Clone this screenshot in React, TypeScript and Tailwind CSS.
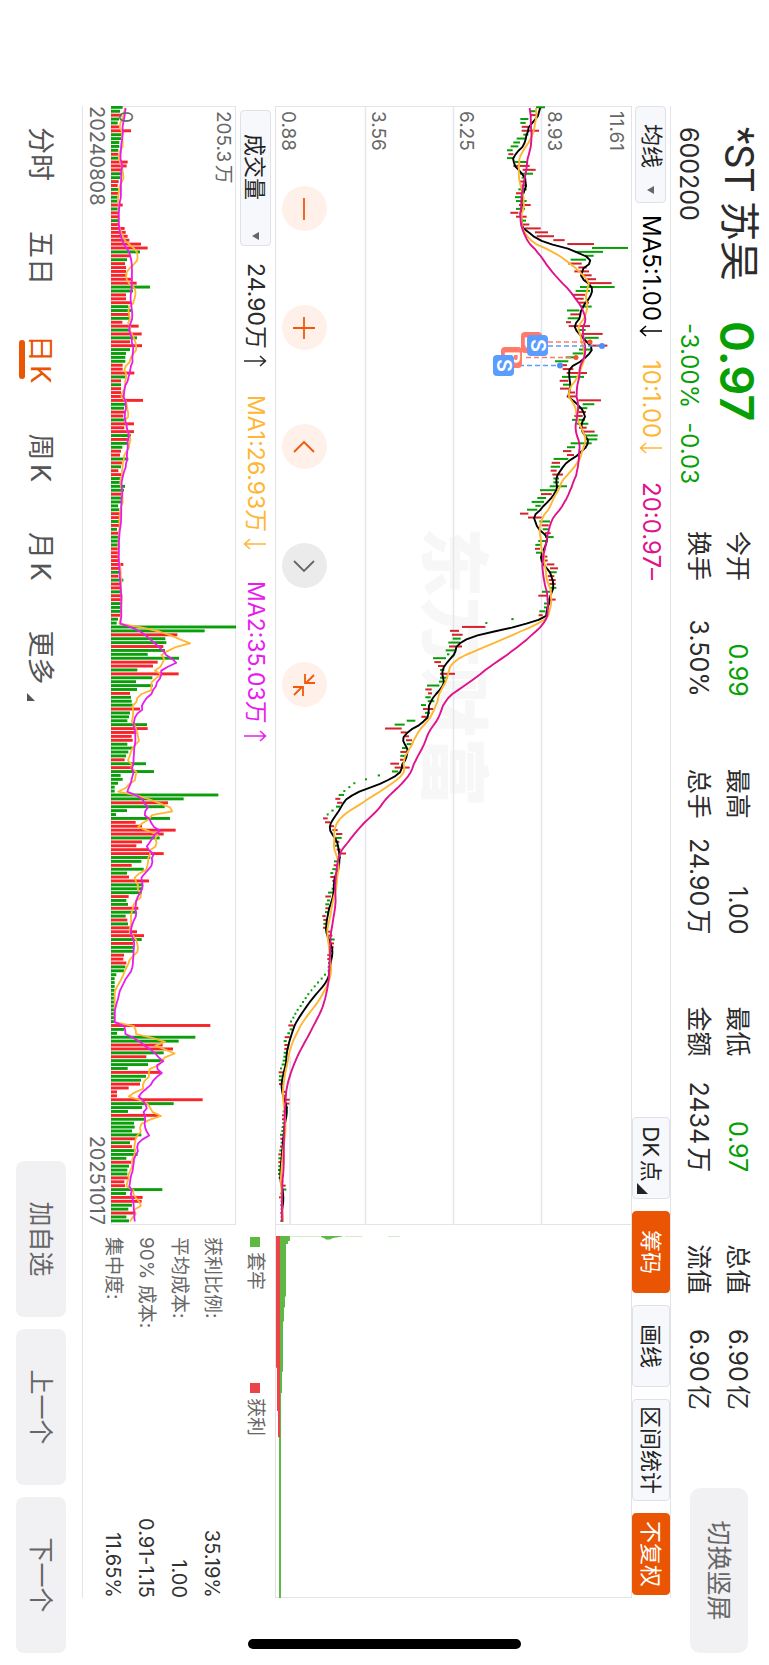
import type { ReactNode } from "react";

type Bar = { up: boolean; a: number; b: number };

// Daily candles, oldest first: colour, low-high in chart units.
const CANDLES = `g828-855 g810-830 r812-832 g781-805 g781-797 r785-805 r785-837 g790-805 g770-795 g760-780
g752-775 g741-758 r745-760 g741-760 g765-803 r760-809 r788-827 g780-819 g785-798 r780-798
r785-800 g775-800 r768-785 g765-783 g768-800 r777-812 g768-795 r751-775 r768-800 g780-798
r788-808 r795-842 r825-864 r830-882 r880-914 r922-1002 g996-1104 g945-1029 g975-1001 g932-978
r925-965 r955-980 r943-987 r960-995 r975-1008 r985-1055 g960-1064 g947-990 r938-975 r945-971
r955-987 g962-995 g921-958 r931-962 g923-960 r918-933 r926-990 g955-977 r965-1028 g975-1016
r972-990 r990-1042 g957-995 g938-970 g917-953 g885-925 r903-921 r908-940 r920-981 g906-972
r899-925 g909-932 r900-930 r925-945 r920-950 r955-1023 g968-1003 g955-982 r955-978 r943-968
g936-975 g950-985 r957-980 r965-1004 g975-1013 g975-1012 g932-995 g921-945 r909-934 r921-942
g881-925 r875-900 g872-900 r872-890 r877-909 g880-897 g880-897 g869-921 g840-885 r843-875
g832-858 g815-852 g826-842 g801-832 r780-805 r804-845 g838-870 r845-866 g848-865 r855-872
g855-881 g835-858 g826-845 r825-840 g828-845 r845-862 r850-863 r860-883 r870-894 g868-890
r863-883 r866-887 r868-887 g870-889 g846-872 r835-862 r860-887 g852-870 g852-866 g838-856
r836-848 g754-761 g676-682 r606-676 r570-597 r576-608 g578-602 g565-600 r567-606 g557-585
g561-568 g519-558 r523-543 r534-555 g540-553 r540-585 g540-563 g537-552 g501-538 r496-515
r504-516 g496-512 g503-523 g483-498 r489-520 g495-510 r484-500 g440-466 g404-434 r375-425
r422-440 r433-447 r438-456 g440-456 g426-440 r421-440 g421-435 r420-433 r391-417 r404-449
g396-415 g353-360 g315-321 g280-286 g265-271 g250-256 g236-252 r226-241 r231-246 g228-241
g214-221 g200-206 r189-203 r195-210 r212-222 r217-233 r228-247 g228-245 r225-238 g225-236
r230-242 r235-258 g232-243 g222-235 r221-232 g217-229 g211-220 r211-222 r217-226 g218-226
g215-225 g204-220 r196-213 g201-210 g196-207 r196-208 g195-206 r187-197 r190-201 g190-202
r189-200 r202-212 r205-217 g213-224 r213-222 r212-221 g208-217 r202-210 r202-210 g204-213
g203-211 g203-209 g192-198 g182-188 g171-177 g161-167 g152-157 g142-148 g134-140 g126-132
g119-125 g110-116 g103-109 g97-103 g90-96 r85-101 g89-97 g82-90 r74-89 g71-80
r73-85 r73-85 g71-82 g70-80 g68-78 g65-75 g60-66 r56-69 g57-68 g56-67
r57-68 g64-70 r66-78 r72-80 r74-89 r76-88 g74-84 g68-78 r66-75 r66-75
g67-75 g65-73 g64-72 g60-69 r61-70 g62-70 r60-68 g58-67 r55-65 g55-65
r55-65 g55-64 g54-62 g54-62 r56-63 r63-70 r66-77 g68-79 g61-68 r57-68
r62-68 r61-69 g62-69 r61-68 g62-68 g61-70`;

// Closes that precede the visible range, needed by the long averages.
const EARLIER = [790, 790, 790, 790, 790, 790, 790, 790, 790, 790, 815, 815, 815, 815, 815, 840, 840, 840, 840];

const VOLUMES = `g35 g27 r32 g24 g20 r27 r60 g33 g30 g25 g25 g22 r22 g22 r50 r47 r33 g30 g27 r23
r20 g22 r22 g20 g20 r35 g20 r22 r25 g22 r25 r41 r44 r50 r55 r90 r110 g87 r57 g48
r42 r45 r45 r47 r60 r77 g117 g66 r45 r45 r60 g52 g60 r57 g54 r34 r83 g58 r92 g78
r57 r93 g57 g45 g43 g43 r35 r35 r70 g43 r30 g30 r30 r30 r36 r96 g43 g39 r43 r37
g43 r69 r40 r69 g60 r55 g50 g34 r30 r27 g52 r33 g30 r22 r30 g28 g30 g42 g39 r30
g33 g30 g21 g25 r27 r25 g27 r27 g18 r22 g23 g23 g23 r23 r23 r23 r27 r37 r30 g30
r22 g37 r30 r33 g30 r33 r30 g30 g30 g30 r28 g21 g17 g377 g281 r199 g163 g166 r157 g162
g110 g204 r140 r126 g79 r203 g124 g75 g125 g78 r57 g60 g62 g65 r87 g57 g54 g49 g108 r110
r76 r62 r65 g49 g66 g52 g45 r41 g105 r63 g129 g29 g35 g21 g11 g11 g322 g218 r171 g161
g48 g15 g177 r74 r93 r194 r158 g146 r93 r76 r114 r158 g118 g91 r62 g98 g48 r54 r114 g93
g93 g93 r53 g46 g51 r82 g76 g44 r49 g51 r60 r78 r99 g92 r66 g70 g69 r39 r37 r46
g43 g39 g16 g11 g11 g11 g11 g11 g11 g11 g11 g11 g11 g11 g11 r298 g39 g18 g253 g203
r155 r186 g158 r106 g154 g111 g50 r147 g105 g90 r87 r53 r18 r18 r275 g188 g93 g51 r143 g101
g69 g71 g63 g91 r75 g57 r63 g74 g80 g46 r61 g54 g49 g49 r53 r40 r42 g154 g45 r95
r92 g63 g52 r70 g46 g54`;

const candles: Bar[] = CANDLES.split(/\s+/).map((c) => {
  const [a, b] = c.slice(1).split("-").map(Number);
  return { up: c[0] === "r", a: (a - 45) / 3, b: (b - 45) / 3 };
});
const volumes: Bar[] = VOLUMES.split(/\s+/).map((c) => ({ up: c[0] === "r", a: 0, b: Number(c.slice(1)) / 3 }));

const STEP = 3.907;
const WIDTH = 1119;
const PRICE_H = 357;
const VOLUME_H = 125;
const xAt = (i: number) => 1.3 + i * STEP;

function average(values: number[], span: number, skip: number) {
  return values.slice(skip).map((_, i) => {
    const end = i + skip + 1;
    const part = values.slice(Math.max(0, end - span), end);
    return part.reduce((s, v) => s + v, 0) / part.length;
  });
}

const line = (values: number[], height: number) =>
  values.map((v, i) => `${i ? "L" : "M"}${(xAt(i) + 0.7).toFixed(1)} ${(height - v).toFixed(1)}`).join("");

const closes = [...EARLIER.map((v) => (v - 45) / 3), ...candles.map((c) => (c.a + c.b) / 2 + 0.7)];
const volumeValues = volumes.map((v) => v.b);
const earlierVolumes = Array<number>(9).fill(15);

const FRAME = "absolute -top-px -left-px h-[calc(100%+2px)] w-[calc(100%+2px)] max-w-none";

function Badge({ x, y, letter, color }: { x: number; y: number; letter: string; color: string }) {
  return (
    <g>
      <rect x={x} y={y} width={21} height={21} rx={4} fill={color} />
      <text x={x + 10.5} y={y + 17.5} fontSize={20} fontWeight={600} fill="#fff" textAnchor="middle">
        {letter}
      </text>
    </g>
  );
}

function PriceChart() {
  return (
    <svg viewBox={`0 0 ${WIDTH} ${PRICE_H}`} preserveAspectRatio="none" className={FRAME} aria-label="日K">
      <g stroke="#e4e7ee" strokeWidth={1.5}>
        <path d="M0 90.5H1119M0 178.5H1119M0 266.500H1119" />
        <path d="M950 342H1119" strokeWidth={1.8} />
      </g>
      {candles.map((c, i) => (
        <rect key={i} x={xAt(i) - 1} y={PRICE_H - c.b} width={2} height={c.b - c.a} fill={c.up ? "#d4232b" : "#06a006"} />
      ))}
      <g fill="none" strokeWidth={1.9} strokeLinejoin="round">
        <path d={line(average(closes, 5, 19), PRICE_H)} stroke="#000" />
        <path d={line(average(closes, 10, 19), PRICE_H)} stroke="#ffb632" />
        <path d={line(average(closes, 20, 19), PRICE_H)} stroke="#e0128c" />
      </g>
      <g fill="none" strokeWidth={1.6} strokeDasharray="5 3">
        <path d="M236 84V42M251.500 106V56" stroke="#ff7a68" />
        <path d="M240 84V31M259.500 113V72" stroke="#5b9cf8" />
      </g>
      <circle cx={236} cy={42} r={2.5} fill="#f0552f" />
      <circle cx={251.5} cy={56} r={2.5} fill="#f0552f" />
      <circle cx={240} cy={30} r={3} fill="#4f8ff5" />
      <circle cx={259.5} cy={72} r={3} fill="#4f8ff5" />
      <Badge x={226} y={90} letter="B" color="#ff7a68" />
      <Badge x={229} y={84} letter="S" color="#5b9cff" />
      <Badge x={241} y={110} letter="B" color="#ff7a68" />
      <Badge x={249} y={118} letter="S" color="#5b9cff" />
    </svg>
  );
}

function VolumeChart() {
  return (
    <svg viewBox={`0 0 ${WIDTH} ${VOLUME_H}`} preserveAspectRatio="none" className={FRAME} aria-label="成交量">
      {volumes.map((v, i) => (
        <rect key={i} x={xAt(i) - 1.4} y={VOLUME_H - v.b} width={2.9} height={v.b} fill={v.up ? "#f8242a" : "#0a9f0a"} />
      ))}
      <g fill="none" strokeWidth={1.8} strokeLinejoin="round">
        <path d={line(average([...earlierVolumes, ...volumeValues], 5, 9), VOLUME_H)} stroke="#ffb632" />
        <path d={line(average([...earlierVolumes, ...volumeValues], 10, 9), VOLUME_H)} stroke="#e91cf0" />
      </g>
    </svg>
  );
}

function ChipChart() {
  return (
    <svg viewBox="0 0 372 357" preserveAspectRatio="none" className={FRAME} aria-label="筹码">
      <path d="M12 352H168V350H147V349H97V348H83V347H72V346H20V344H17V342H12Z" fill="#5db944" />
      <path d="M12 311H13L14 308L15.500 306V302L14 299L13 293L12 288Z" fill="#5db944" />
      <path d="M12 341H12.600V312H12ZM12 287H12.600V270H12ZM12 244H12.600V232H12Z" fill="#c5e6bd" />
      <path d="M12 353H372V351H12Z" fill="#5db944" />
      <path d="M12 356V352H212V354H186V355H143V356Z" fill="#ea4448" />
    </svg>
  );
}

const Caret = () => (
  <svg viewBox="0 0 8 7" className="h-[7px] w-2" aria-hidden="true">
    <path d="M0 0H8L4 7Z" fill="#666" />
  </svg>
);

const Corner = ({ className }: { className: string }) => (
  <svg viewBox="0 0 10 10" className={className} aria-hidden="true">
    <path d="M10 0V10H0Z" fill="currentColor" />
  </svg>
);

function Arrow({ up = false }: { up?: boolean }) {
  return (
    <svg viewBox="0 0 12 24" className="h-6 w-3" fill="none" stroke="currentColor" strokeWidth={1.5} role="img" aria-label={up ? "↑" : "↓"}>
      <path d={up ? "M6 23V2M1 7L6 1.500L11 7" : "M6 1V22M1 17L6 22.500L11 17"} />
    </svg>
  );
}

function Stat({ label, value, green }: { label: string; value: string; green?: boolean }) {
  return (
    <div className="flex items-center justify-between">
      <dt>{label}</dt>
      <dd className={green ? "text-[#06a006]" : ""}>{value}</dd>
    </div>
  );
}

const STATS = [
  [["今开", "0.99", true], ["换手", "3.50%", false]],
  [["最高", "1.00", false], ["总手", "24.90万", false]],
  [["最低", "0.97", true], ["金额", "2434万", false]],
  [["总值", "6.90亿", false], ["流值", "6.90亿", false]],
] as const;

function ToolButton({ children, active, wide }: { children: ReactNode; active?: boolean; wide?: boolean }) {
  const size = wide ? "w-[102px]" : "w-[82px]";
  const look = active ? "border-[#ea5504] bg-[#ea5504] text-white" : "border-[#dfe1e8] bg-[#f7f8fb] text-[#222]";
  return (
    <button type="button" className={`relative flex h-[38px] items-center justify-center rounded border text-[22px] leading-none whitespace-nowrap ${size} ${look}`}>
      {children}
    </button>
  );
}

function RoundButton({ label, muted, path }: { label: string; muted?: boolean; path: string }) {
  return (
    <button
      type="button"
      aria-label={label}
      className={`flex size-[45px] items-center justify-center rounded-full ${muted ? "bg-[#ebebeb] text-[#666]" : "bg-[#fff0e9] text-[#f0580c]"}`}
    >
      <svg viewBox="0 0 24 24" className="size-6" fill="none" stroke="currentColor" strokeWidth={1.8} aria-hidden="true">
        <path d={path} />
      </svg>
    </button>
  );
}

const TABS = ["分时", "五日", "日K", "周K", "月K"];
const PRICES = [
  ["11.61", "top-[5px]"],
  ["8.93", "top-[67px]"],
  ["6.25", "top-[155px]"],
  ["3.56", "top-[243px]"],
  ["0.88", "top-[333px]"],
];
const CHIP_ROWS = [
  ["获利比例:", "35.19%"],
  ["平均成本:", "1.00"],
  ["90% 成本:", "0.91-1.15"],
  ["集中度:", "11.65%"],
];

export default function App() {
  return (
    <div className="relative h-screen w-full overflow-hidden bg-white">
      <main className="absolute top-0 left-full flex h-[100vw] w-[100vh] origin-top-left rotate-90 flex-col bg-white font-[Inter,'Noto_Sans_CJK_SC',sans-serif] leading-none text-[#2b2b2b] [text-autospace:normal]">
        <header className="flex h-[98px] shrink-0 items-start pr-3 pl-[127px]">
          <div className="w-[404px]">
            <div className="flex h-[62px] items-center">
              <h1 className="w-[194px] font-[Roboto,'Noto_Sans_CJK_SC',sans-serif] text-[40px] whitespace-nowrap">*ST 苏吴</h1>
              <strong className="text-[47px] font-semibold text-[#06a006]">0.97</strong>
            </div>
            <div className="flex h-9 items-center text-[25px]">
              <span className="w-[196px]">600200</span>
              <span className="flex gap-[14px] text-2xl text-[#06a006]">
                <span>-3.00%</span>
                <span>-0.03</span>
              </span>
            </div>
          </div>
          <dl className="grid flex-1 grid-cols-4 gap-x-[72px] pt-3 pr-[78px] text-[25px]">
            {STATS.map((column) => (
              <div key={column[0][0]} className="grid auto-rows-[39px]">
                {column.map(([label, value, green]) => (
                  <Stat key={label} label={label} value={value} green={green} />
                ))}
              </div>
            ))}
          </dl>
          <button type="button" className="mt-[21px] h-[58px] w-[165px] rounded-[10px] bg-[#f1f1f4] text-[25px] text-[#666]">
            切换竖屏
          </button>
        </header>

        <section className="mr-[67px] ml-[106px] flex min-h-0 flex-1 flex-col border-y border-[#e4e4e8]">
          <div className="flex h-[38px] shrink-0 items-center justify-between">
            <div className="flex items-center text-2xl whitespace-nowrap">
              <button type="button" className="flex h-[31px] w-[97px] items-center gap-[18px] rounded border border-[#dfe1e8] bg-[#f7f8fb] pl-[17px] text-[22px] text-[#222]">
                均线
                <Caret />
              </button>
              <span className="ml-3 flex w-[145px] items-center gap-1 text-black">MA5:1.00<Arrow /></span>
              <span className="flex w-[122px] items-center gap-1 text-[#ffb632]">10:1.00<Arrow /></span>
              <span className="text-[#e0128c]">20:0.97–</span>
            </div>
            <div className="flex gap-3 pr-[3px]">
              <ToolButton>
                <span className="pr-2">DK点</span>
                <Corner className="absolute right-1 bottom-1 size-[11px]" />
              </ToolButton>
              <ToolButton active>筹码</ToolButton>
              <ToolButton>画线</ToolButton>
              <ToolButton wide>区间统计</ToolButton>
              <ToolButton active>不复权</ToolButton>
            </div>
          </div>

          <div className="flex min-h-0 flex-1">
            <div className="flex min-w-0 flex-1 flex-col">
              <div className="relative min-h-0 flex-1 border border-[#e4e4e8]">
                <span className="absolute top-[143px] left-[420px] text-[70px] font-black text-[#f7f7f7]">东方财富</span>
                <PriceChart />
                {PRICES.map(([text, top]) => (
                  <span key={text} className={`absolute left-1 text-[19px] text-[#666] ${top}`}>{text}</span>
                ))}
                <div className="absolute bottom-[6px] left-[79px] flex gap-[74px]">
                  <RoundButton label="缩小" path="M1 12H23" />
                  <RoundButton label="放大" path="M1 12H23M12 1V23" />
                  <RoundButton label="向左" path="M17 2L7 12L17 22" />
                  <RoundButton label="向右" muted path="M7 2L17 12L7 22" />
                  <RoundButton label="收起" path="M2 2L10 10M10 1V11H1M22 22L14 14M14 23V13H23" />
                </div>
              </div>
              <div className="flex h-[39px] shrink-0 items-center text-[23px] whitespace-nowrap [text-autospace:no-autospace]">
                <button type="button" className="ml-1 flex h-[31px] w-[136px] items-center justify-between rounded border border-[#dfe1e8] bg-[#f7f8fb] pr-[5px] pl-[23px] text-[22px] text-[#222]">
                  成交量
                  <Caret />
                </button>
                <span className="ml-[17px] flex w-[132px] items-center gap-[6px]">24.90万<Arrow up /></span>
                <span className="flex w-[186px] items-center gap-[6px] text-[#ffb632]">MA1:26.93万<Arrow /></span>
                <span className="flex items-center gap-[6px] text-[#e91cf0]">MA2:35.03万<Arrow up /></span>
              </div>
              <div className="relative h-[125px] shrink-0 border border-[#e4e4e8]">
                <VolumeChart />
                <span className="absolute top-[2px] left-1 text-[19px] text-[#666]">205.3万</span>
                <span className="absolute bottom-1 left-1 text-[19px] text-[#666]">0</span>
              </div>
              <div className="flex h-7 shrink-0 items-center justify-between text-[20px] text-[#666]">
                <time>20240808</time>
                <time>20251017</time>
              </div>
            </div>

            <aside className="flex w-[373px] shrink-0 flex-col">
              <div className="relative min-h-0 flex-1 border-y border-r border-[#e4e4e8]">
                <ChipChart />
              </div>
              <div className="flex h-[39px] shrink-0 items-center pl-3 text-[19px] text-[#666]">
                <span className="flex w-[146px] items-center gap-[5px]"><i className="size-[10px] bg-[#5db944]" />套牢</span>
                <span className="flex items-center gap-[5px]"><i className="size-[10px] bg-[#ea4448]" />获利</span>
              </div>
              <dl className="h-[153px] pt-[7px] pl-3 text-[19px]">
                {CHIP_ROWS.map(([label, value]) => (
                  <div key={label} className="flex h-[33px] items-center justify-between">
                    <dt className="text-[#666]">{label}</dt>
                    <dd className="text-[20px] text-[#333]">{value}</dd>
                  </div>
                ))}
              </dl>
            </aside>
          </div>
        </section>

        <footer className="flex h-[82px] shrink-0 items-center justify-between pr-3 pl-[127px]">
          <nav className="flex gap-[50px] text-[27px] text-[#555]">
            {TABS.map((tab) => (
              <button key={tab} type="button" className={`relative ${tab === "日K" ? "text-[#ea5504]" : ""}`}>
                {tab}
                {tab === "日K" && <span className="absolute inset-x-0 -bottom-2 mx-auto h-[6px] w-[39px] rounded-full bg-[#ea5504]" />}
              </button>
            ))}
            <button type="button" className="relative">
              更多
              <Corner className="absolute -right-4 bottom-0 size-2" />
            </button>
          </nav>
          <div className="flex gap-3 text-[25px] text-[#666]">
            {["加自选", "上一个", "下一个"].map((label) => (
              <button key={label} type="button" className="h-[50px] w-[156px] rounded-lg bg-[#f1f1f4]">{label}</button>
            ))}
          </div>
        </footer>

        <div className="absolute inset-y-0 right-4 my-auto h-[273px] w-[10px] rounded-full bg-black" />
      </main>
    </div>
  );
}
